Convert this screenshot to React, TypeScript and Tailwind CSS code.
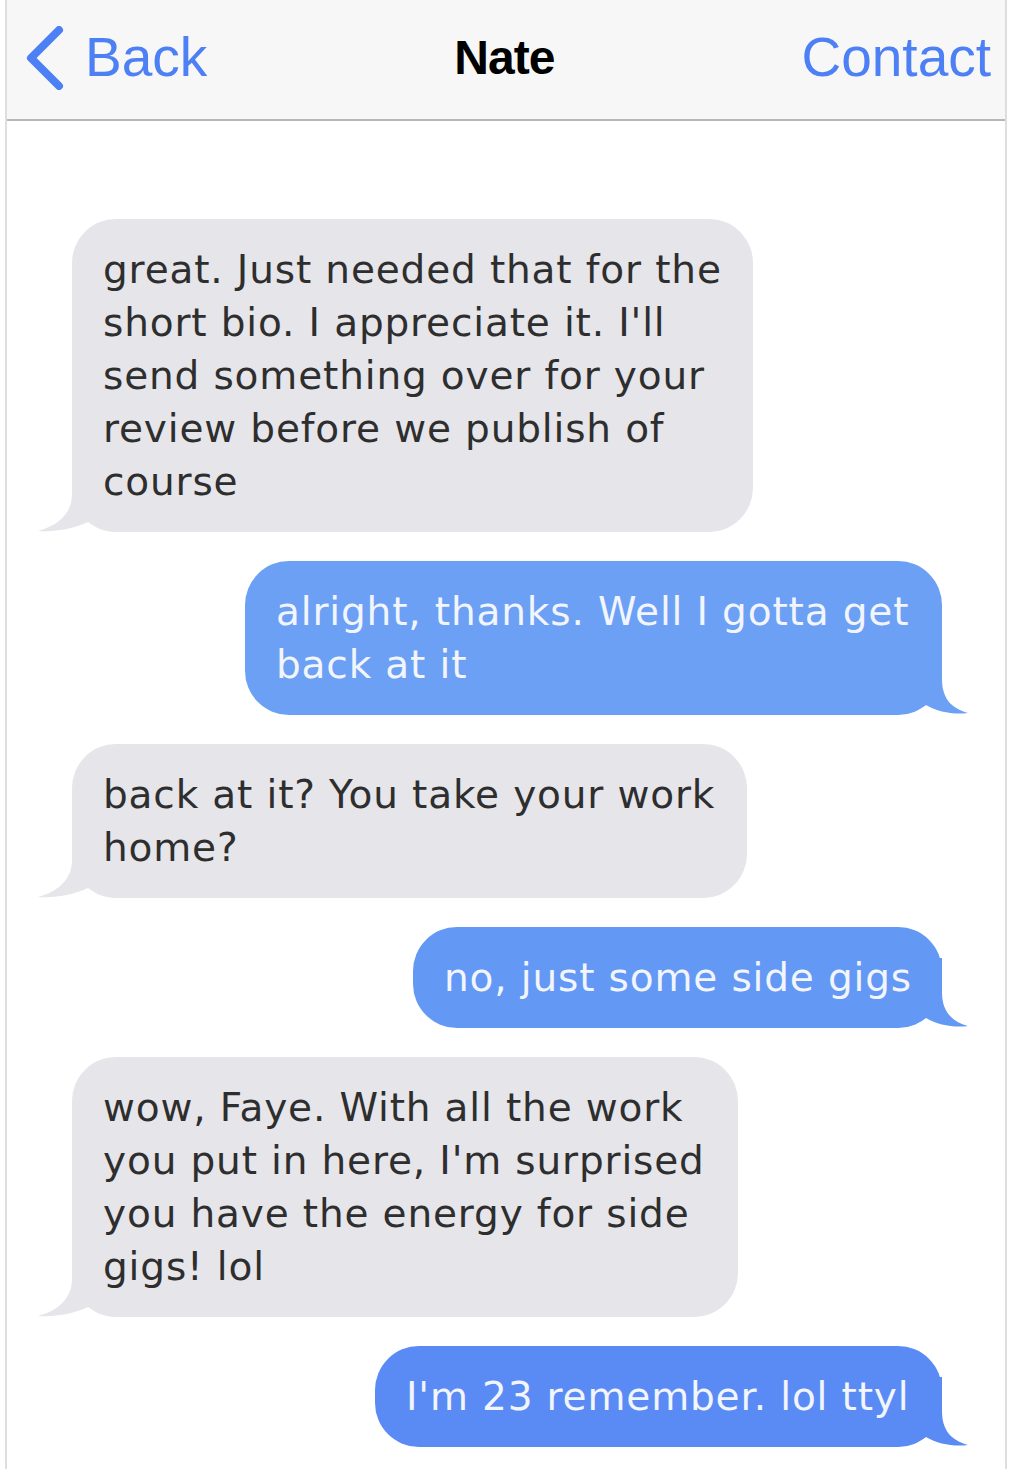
const messages = [
  {
    from: 'them',
    width: 'w-[681px]',
    lines: ['great. Just needed that for the', "short bio. I appreciate it. I'll", 'send something over for your', 'review before we publish of', 'course'],
  },
  {
    from: 'me',
    width: 'w-[697px]',
    color: 'bg-[#6ca0f5]',
    fill: '#6ca0f5',
    lines: ['alright, thanks. Well I gotta get', 'back at it'],
  },
  {
    from: 'them',
    width: 'w-[675px]',
    lines: ['back at it? You take your work', 'home?'],
  },
  {
    from: 'me',
    width: 'w-[529px]',
    color: 'bg-[#6398f5]',
    fill: '#6398f5',
    lines: ['no, just some side gigs'],
  },
  {
    from: 'them',
    width: 'w-[666px]',
    lines: ['wow, Faye. With all the work', "you put in here, I'm surprised", 'you have the energy for side', 'gigs! lol'],
  },
  {
    from: 'me',
    width: 'w-[567px]',
    color: 'bg-[#5a8bf5]',
    fill: '#5a8bf5',
    lines: ["I'm 23 remember. lol ttyl"],
  },
]

function LeftTail() {
  return (
    <svg className="absolute left-[-34px] bottom-0" width="80" height="80" viewBox="0 0 80 80">
      <path d="M34,10 L34,42 C34,60 22,73 0,79 C18,80 36,77 52,69 C60,76 70,80 80,80 L80,10 Z" fill="#e5e5ea" />
    </svg>
  )
}

function RightTail({ fill }: { fill: string }) {
  return (
    <svg className="absolute right-[-26px] bottom-0" width="80" height="80" viewBox="0 0 80 80">
      <path d="M54,10 L54,44 C54,62 62,73 80,78 C66,80 50,77 38,70 C28,76 18,80 0,80 L0,10 Z" fill={fill} />
    </svg>
  )
}

export default function App() {
  return (
    <div className="w-[1013px] h-[1469px] bg-white overflow-hidden">
      <div className="ml-[5px] w-[1002px] h-full border-x-2 border-[#dedede]">
        <div className="h-[121px] bg-[#f7f7f7] border-b-2 border-[#b7b7b7] flex items-center justify-between pl-[16px] pr-[14px] pb-[4px] font-['Liberation_Sans',Arial,sans-serif]">
          <div className="flex items-center gap-[20px] text-[#4c80f4]">
            <svg width="42" height="64" viewBox="0 0 42 64">
              <path d="M36,4 L8,32 L36,60" fill="none" stroke="#4c80f4" strokeWidth="8" strokeLinecap="round" strokeLinejoin="round" />
            </svg>
            <span className="text-[55px] leading-none">Back</span>
          </div>
          <span className="text-[48px] font-bold leading-none text-black tracking-[-1px]">Nate</span>
          <span className="text-[55px] leading-none text-[#4c80f4]">Contact</span>
        </div>
        <div className="flex flex-col gap-[29px] pt-[98px] pl-[65px] pr-[63px] font-['DejaVu_Sans',Verdana,sans-serif] text-[39px] leading-[53px] tracking-[0.85px]">
          {messages.map((m, i) =>
            m.from === 'them' ? (
              <div key={i} className={`relative self-start ${m.width} rounded-[44px] bg-[#e5e5ea] pl-[31px] py-[24px] text-[#2e2e2e]`}>
                <LeftTail />
                <div className="relative whitespace-nowrap">
                  {m.lines.map((l, j) => (
                    <div key={j}>{l}</div>
                  ))}
                </div>
              </div>
            ) : (
              <div key={i} className={`relative self-end ${m.width} rounded-[44px] ${m.color} pl-[31px] py-[24px] text-[#f2f5fc]`}>
                <RightTail fill={m.fill!} />
                <div className="relative whitespace-nowrap">
                  {m.lines.map((l, j) => (
                    <div key={j}>{l}</div>
                  ))}
                </div>
              </div>
            )
          )}
        </div>
      </div>
    </div>
  )
}
